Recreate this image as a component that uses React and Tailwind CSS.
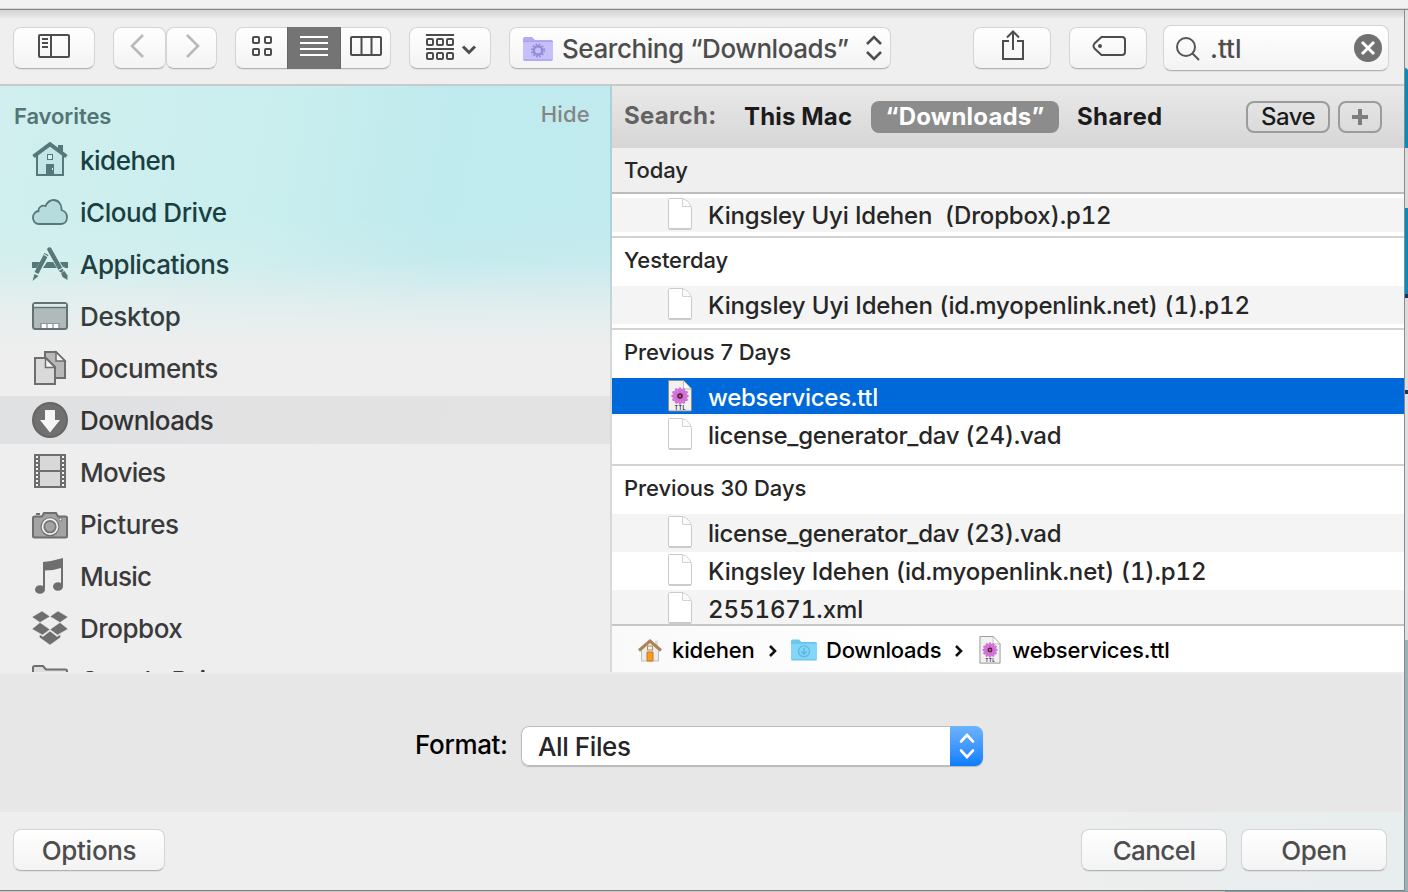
const buttonBase =
  "flex items-center justify-center border border-[#d4d4d4] border-b-[#b4b4b4] bg-linear-to-b from-white to-[#f3f3f3] shadow-[0_1px_0_rgba(0,0,0,0.06)]";

/* ---------- toolbar icons ---------- */

function SidebarIcon() {
  return (
    <svg width="32" height="24" viewBox="0 0 32 24" fill="none" stroke="#4d4d4d" strokeWidth="2" className="-mt-1">
      <rect x="1" y="1" width="30" height="22" rx="1" />
      <path d="M13 1v22M4 5h6M4 9h6M4 13h6" />
    </svg>
  );
}

function ChevronIcon({ flip }) {
  return (
    <svg width="14" height="26" viewBox="0 0 14 26" fill="none" stroke="#b9b9b9" strokeWidth="2.6" className="-mt-1">
      <path d={flip ? "M1 2l11 11L1 24" : "M13 2L2 13l11 11"} />
    </svg>
  );
}

function GridIcon() {
  return (
    <svg width="22" height="22" viewBox="0 0 22 22" fill="none" stroke="#4d4d4d" strokeWidth="2">
      <rect x="2" y="2" width="6" height="6" rx="1" />
      <rect x="14" y="2" width="6" height="6" rx="1" />
      <rect x="2" y="14" width="6" height="6" rx="1" />
      <rect x="14" y="14" width="6" height="6" rx="1" />
    </svg>
  );
}

function ArrangeIcon() {
  return (
    <svg width="52" height="28" viewBox="0 0 52 28" fill="none" stroke="#4d4d4d" strokeWidth="2" className="ml-0.5 mt-0.5">
      <path d="M1 2h28M1 16h28" />
      <rect x="2" y="6" width="6" height="6" rx="1" />
      <rect x="12" y="6" width="6" height="6" rx="1" />
      <rect x="22" y="6" width="6" height="6" rx="1" />
      <rect x="2" y="20" width="6" height="6" rx="1" />
      <rect x="12" y="20" width="6" height="6" rx="1" />
      <rect x="22" y="20" width="6" height="6" rx="1" />
      <path d="M38 13.5l6 6 6-6" strokeWidth="3" />
    </svg>
  );
}

function SmartFolderIcon() {
  return (
    <svg width="30" height="26" viewBox="0 0 30 26" className="ml-px">
      <path d="M0 3a2 2 0 012-2h7l3 3h16a2 2 0 012 2v17a2 2 0 01-2 2H2a2 2 0 01-2-2z" fill="#b3aaf0" />
      <path d="M0 6h30v17H0z" fill="#c5bffa" />
      <path d="M0 5.5h30" stroke="#aaa1ec" />
      <circle cx="15" cy="14.5" r="4.2" fill="none" stroke="#938ad9" strokeWidth="2.4" />
      <circle cx="15" cy="14.5" r="6.2" fill="none" stroke="#938ad9" strokeWidth="1.8" strokeDasharray="1.6 1.65" />
    </svg>
  );
}

/* ---------- sidebar icons, all on a 36px box ---------- */

const G = "#6e6e6e";
const T = "#567879";

const sidebarIcons = {
  home: (
    <>
      <path d="M5 14v19h26V14L18 3z" fill="#c3e6e8" />
      <path d="M5 13v20h26V13" fill="none" stroke={T} strokeWidth="2" />
      <path d="M26 3h5v10l-5-4z" fill={T} />
      <path d="M1.5 14.5L18 2.2l16.5 12.3" fill="none" stroke={T} strokeWidth="4" />
      <rect x="15.5" y="12.5" width="5" height="5" fill="#d7f1f2" stroke={T} />
      <path d="M14 22h8v12h-8z" fill={T} />
      <path d="M20.5 26v2" stroke="#d7f1f2" />
    </>
  ),
  cloud: (
    <path
      d="M7 30a6 6 0 01-6-6.5c0-3.500 2.500-6 5.500-6.500-.5-3.500 3.500-6.500 7-5C15.500 8 18.500 6 21.500 6c5 0 8.500 4.500 8 10 3 .8 5.500 3 5.500 7.500 0 4-2.800 6.500-6.500 6.500z"
      fill="#b6dcde"
      stroke={T}
      strokeWidth="1.8"
    />
  ),
  apps: (
    <>
      <path d="M0 16h8l-3.500 6H0zM28 16h8v6h-4.500zM15 16h6l4 6H11z" fill={T} />
      <path d="M14.500 8L4.500 27" stroke={T} strokeWidth="4.400" />
      <path d="M17.500 3.500L29 24" stroke={T} strokeWidth="4.400" strokeLinecap="round" />
      <path d="M29 27l3.500-2 3 4.500V34l-5-3z" fill={T} />
      <path d="M2.500 28l4 2-6 5z" fill={T} />
      <path d="M12 8.500l5 3M26.500 24.500l6-3.500" stroke="#cdebec" strokeWidth="1.200" />
    </>
  ),
  desktop: (
    <>
      <rect x="1" y="5" width="34" height="26" rx="2.500" fill="#b0baba" stroke="#637374" strokeWidth="2" />
      <path d="M2 6h32v3H2z" fill="#dceaea" />
      <path d="M2 9.500h32" stroke="#637374" strokeWidth="1.400" />
      <path d="M8.500 30v-4.500h19V30" fill="none" stroke="#8e9999" />
      <path d="M10 26h4v4h-4zM16 26h4v4h-4zM22 26h4v4h-4z" fill="#fff" />
    </>
  ),
  documents: (
    <>
      <path d="M13 2h11l9 9v17H13z" fill="#b8b8b8" stroke={G} strokeWidth="2" />
      <path d="M24 2v9h9z" fill="#f4f4f4" stroke={G} strokeWidth="1.500" />
      <path d="M3 8h11l9 9v17H3z" fill="#dadada" stroke={G} strokeWidth="2" />
      <path d="M13.500 8v9.500H23z" fill="#f4f4f4" stroke={G} strokeWidth="1.500" />
    </>
  ),
  downloads: (
    <>
      <circle cx="18" cy="18" r="18" fill="#666" />
      <circle cx="18" cy="18" r="16" fill="#707070" />
      <path d="M13 8h10v10h5L18 30.500 8 18h5z" fill="#f5f5f5" />
    </>
  ),
  movies: (
    <>
      <path d="M2 0h32v34H2z" fill={G} />
      <path d="M8 2h20v14H8zM8 18h20v14H8z" fill="#d8d8d8" />
      <path d="M5 2v31M31 2v31" stroke="#f4f4f4" strokeWidth="2" strokeDasharray="2 2" />
    </>
  ),
  pictures: (
    <>
      <path d="M1 12a1.500 1.500 0 011.500-1.500H10l2-3.500h12l2 3.500h7.500A1.500 1.500 0 0135 12v18a1.500 1.500 0 01-1.500 1.500h-31A1.500 1.500 0 011 30z" fill="#a3a3a3" stroke={G} strokeWidth="2" />
      <path d="M4 8h4" stroke={G} strokeWidth="2" />
      <circle cx="18" cy="20.700" r="9.500" fill={G} />
      <circle cx="18" cy="20.700" r="7.500" fill="#777" stroke="#f3f3f3" strokeWidth="1.700" />
      <circle cx="18" cy="20.700" r="4.800" fill="#a3a3a3" />
      <circle cx="28.500" cy="13.500" r="1.500" fill="#eee" stroke={G} />
    </>
  ),
  music: (
    <>
      <path d="M11 4q10-1 20-4v12l-2-.5V10q-8 2.500-16 2.500V30h-2z" fill={G} />
      <path d="M29 9h2v19h-2z" fill={G} />
      <ellipse cx="8" cy="31.500" rx="5" ry="4.300" fill={G} />
      <ellipse cx="26" cy="28.500" rx="5" ry="4.300" fill={G} />
    </>
  ),
  dropbox: (
    <path
      d="M10 1l8 5.500L8 12.500 0 7zM26 1l10 6-8 5.500-10-6zM0 19l8-6.500 10 7-7.500 5.500zM36 19l-8-6.500-10 7 7.500 5.500zM18 21l7 5.500 3.500-2v3L18 35 7.500 27.500v-3l3.500 2z"
      fill={G}
      stroke="#eee"
      strokeWidth=".5"
    />
  ),
  folder: (
    <path d="M1 36V5.500A1.500 1.500 0 012.500 4H11l3 3.500h19.500A1.500 1.500 0 0135 9v27z" fill="#dedede" stroke={G} strokeWidth="2" />
  ),
};

const favorites = [
  { label: "kidehen", icon: "home", style: "text-[#193f42] tracking-[-0.5px]" },
  { label: "iCloud Drive", icon: "cloud", style: "text-[#193f42] tracking-[-0.45px]" },
  { label: "Applications", icon: "apps", style: "text-[#213f41] tracking-[-0.45px]" },
  { label: "Desktop", icon: "desktop", style: "text-[#353d3e] tracking-[-0.35px]" },
  { label: "Documents", icon: "documents", style: "text-[#3a3a3a] tracking-[-0.45px]" },
  { label: "Downloads", icon: "downloads", style: "text-[#333] tracking-[-0.6px]", active: true },
  { label: "Movies", icon: "movies", style: "text-[#3a3a3a] tracking-[-0.75px]" },
  { label: "Pictures", icon: "pictures", style: "text-[#3a3a3a] tracking-[-0.35px]" },
  { label: "Music", icon: "music", style: "text-[#3a3a3a] tracking-[-0.7px]" },
  { label: "Dropbox", icon: "dropbox", style: "text-[#3a3a3a] tracking-[-0.5px]" },
  { label: "Google Drive", icon: "folder", style: "text-[#3a3a3a] tracking-[-0.6px]" },
];

/* ---------- file icons ---------- */

function FileIcon() {
  return (
    <svg width="24" height="32" viewBox="0 0 24 32" className="shrink-0">
      <path d="M.5 1.500a1 1 0 011-1H14C19 1.500 23 6 23.500 11v19a1 1 0 01-1 1h-21a1 1 0 01-1-1z" fill="#fff" stroke="#cbcbcb" />
      <path d="M1 31h22" stroke="#b3b3b3" />
      <path d="M14.500 1v7.500h8.500" fill="#fafafa" stroke="#d2d2d2" />
    </svg>
  );
}

function TtlIcon({ width = 24, height = 32 }) {
  return (
    <svg width={width} height={height} viewBox="0 0 24 32" className="shrink-0">
      <path d="M.5.5h15l8 8.500v22H.5z" fill="#f1f1f1" stroke="#8d8d8d" />
      <path d="M15.500.5V9h8z" fill="#fff" stroke="#aaa" strokeWidth=".8" />
      <g fill="#dc7be0" stroke="#b04fb8" strokeWidth=".5">
        {[0, 30, 60, 90, 120, 150, 180, 210, 240, 270, 300, 330].map((a) => (
          <ellipse key={a} cx="12" cy="11.500" rx="1.600" ry="4" transform={`rotate(${a} 12 16)`} />
        ))}
      </g>
      <circle cx="12" cy="16" r="2.800" fill="#5b1d50" />
      <circle cx="12" cy="16" r="1.100" fill="#b98a3c" />
      <text x="12.300" y="29.500" fontSize="5.500" fontWeight="600" textAnchor="middle" fill="#222" letterSpacing=".4">
        TTL
      </text>
    </svg>
  );
}

function FileRow({ name, ttl, className }) {
  return (
    <div className={`flex items-center pl-14 ${className}`}>
      <span className="-mt-[2px] flex">{ttl ? <TtlIcon /> : <FileIcon />}</span>
      <span className="ml-4 mt-0.5 whitespace-pre text-2xl leading-none tabular-nums">{name}</span>
    </div>
  );
}

function GroupTitle({ children, className }) {
  return (
    <div className={`flex items-center pl-3 text-[22px] leading-none tracking-[-0.08px] text-[#262626] ${className}`}>
      {children}
    </div>
  );
}

function PathArrow() {
  return (
    <svg width="8" height="14" viewBox="0 0 8 14" fill="none" stroke="#111" strokeWidth="2.600" className="mt-0.5">
      <path d="M1 2l5 5-5 5" />
    </svg>
  );
}

/* ---------- panels ---------- */

function Toolbar() {
  return (
    <div className="flex h-[76px] shrink-0 items-start border-b-2 border-[#c9c9c9] bg-[linear-gradient(#d3d3d3,#e8e8e8_8px,#efefef_8px)] pl-[13px] pt-[17px] text-[#4d4d4d]">
      <button className={`${buttonBase} h-[42px] w-[82px] rounded-lg`}>
        <SidebarIcon />
      </button>
      <button className={`${buttonBase} ml-[18px] h-[42px] w-[53px] rounded-lg pr-[5px]`}>
        <ChevronIcon />
      </button>
      <button className={`${buttonBase} h-[42px] w-[51px] rounded-lg pl-0.5`}>
        <ChevronIcon flip />
      </button>

      <div className={`${buttonBase} ml-[18px] h-[42px] w-[156px] rounded-lg`}>
        <span className="-mt-1 flex w-[51px] justify-center">
          <GridIcon />
        </span>
        <span className="-my-px flex h-[42px] w-[54px] items-center justify-center border-x border-[#666] bg-[#747474] pb-1">
          <svg width="28" height="20" viewBox="0 0 28 20" stroke="#fff" strokeWidth="2">
            <path d="M0 1h28M0 7h28M0 13h28M0 19h28" />
          </svg>
        </span>
        <span className="-mt-1 flex w-[49px] justify-center">
          <svg width="32" height="20" viewBox="0 0 32 20" fill="none" stroke="#4d4d4d" strokeWidth="2">
            <rect x="1" y="1" width="30" height="18" rx="1" />
            <path d="M11.500 1v18M21.500 1v18" />
          </svg>
        </span>
      </div>

      <button className={`${buttonBase} ml-[18px] h-[42px] w-[82px] rounded-lg pb-1`}>
        <ArrangeIcon />
      </button>

      <div className={`${buttonBase} ml-[18px] h-[42px] w-[382px] justify-start! rounded-lg pl-3 pr-2 pt-px`}>
        <SmartFolderIcon />
        <span className="ml-[9px] flex-1 whitespace-nowrap text-[26px] leading-none tracking-[-0.43px]">
          Searching “Downloads”
        </span>
        <svg width="16" height="26" viewBox="0 0 16 26" fill="none" stroke="#4d4d4d" strokeWidth="2.600" className="-mt-0.5">
          <path d="M1 9l7-7 7 7M1 17l7 7 7-7" />
        </svg>
      </div>

      <button className={`${buttonBase} ml-[82px] h-[42px] w-[78px] rounded-lg`}>
        <svg width="24" height="32" viewBox="0 0 24 32" fill="none" stroke="#4d4d4d" strokeWidth="2" className="-mt-1.5 ml-0.5">
          <path d="M8 12H2v18h20V12h-6M12 21V2.500M6 8.500l6-6 6 6" />
        </svg>
      </button>
      <button className={`${buttonBase} ml-[18px] h-[42px] w-[78px] rounded-lg`}>
        <svg width="34" height="20" viewBox="0 0 34 20" fill="none" stroke="#4d4d4d" strokeWidth="2" className="-mt-1 ml-0.5">
          <path d="M9.500 1H30a3 3 0 013 3v12a3 3 0 01-3 3H9.500L2.500 12.500q-2-2.500 0-5z" />
          <circle cx="8" cy="10" r="2" fill="#4d4d4d" stroke="none" />
        </svg>
      </button>

      <div className={`${buttonBase} -mt-[2px] ml-4 h-[46px] w-[226px] rounded-lg pl-3 pr-[6px]`}>
        <svg width="24" height="24" viewBox="0 0 24 24" fill="none" stroke="#555" strokeWidth="2" className="mt-0.5">
          <circle cx="10" cy="10" r="9" />
          <path d="M16.500 16.500L23 23" />
        </svg>
        <span className="ml-2.5 mt-0.5 flex-1 text-[26px] leading-none">.ttl</span>
        <svg width="28" height="28" viewBox="0 0 28 28">
          <circle cx="14" cy="14" r="14" fill="#717171" />
          <path d="M8 8l12 12M20 8L8 20" stroke="#fff" strokeWidth="3" />
        </svg>
      </div>
    </div>
  );
}

function Sidebar() {
  return (
    <div className="h-[586px] w-[610px] overflow-hidden bg-[linear-gradient(to_bottom,transparent_130px,rgba(238,238,238,0.15)_175px,rgba(238,238,238,0.7)_220px,#eeeeee_262px),linear-gradient(100deg,#d0efee,#caeeee_40%,#bfeaee_65%,#c1ebef)]">
      <div className="flex h-12 justify-between pl-[14px] pr-5 text-[22px] leading-none">
        <span className="mt-[19px] font-semibold tracking-[-0.08px] text-[#527575]">Favorites</span>
        <span className="mt-[17px] font-medium tracking-[0.2px] text-[#868686]">Hide</span>
      </div>
      {favorites.map((item) => (
        <div key={item.label} className="flex h-[52px] flex-col justify-center">
          <div className={`flex h-12 items-center pl-8 ${item.active ? "bg-[linear-gradient(100deg,#e0e1e3,#e4e3e3)]" : ""}`}>
            <svg width="36" height="36" viewBox="0 0 36 36" className="shrink-0">
              {sidebarIcons[item.icon]}
            </svg>
            <span className={`ml-3 mt-0.5 whitespace-nowrap text-[26px] leading-none ${item.style}`}>{item.label}</span>
          </div>
        </div>
      ))}
    </div>
  );
}

function Results() {
  return (
    <div className="flex h-[586px] w-[792px] flex-col overflow-hidden bg-white text-[#262626]">
      <div className="flex h-[62px] shrink-0 items-center bg-linear-to-b from-[#e9e9e9] to-[#d6d6d6] pl-3 text-2xl font-bold leading-none text-[#1b1b1b]">
        <span className="-mt-0.5 w-[120px] tracking-[0.3px] text-[#626262]">Search:</span>
        <span className="w-[127px] tracking-[0.15px]">This Mac</span>
        <span className="flex h-8 w-[188px] items-center justify-center rounded-lg bg-[#8c8c8c] tracking-[0.2px] text-white">“Downloads”</span>
        <span className="ml-[18px] w-[169px] tracking-[0.4px]">Shared</span>
        <button className="flex h-8 w-21 items-center justify-center rounded-lg border-2 border-[#9b9b9b] font-medium tracking-[-0.5px]">Save</button>
        <button className="ml-2 flex h-8 w-11 items-center justify-center rounded-lg border-2 border-[#9b9b9b]">
          <svg width="16" height="16" viewBox="0 0 16 16" stroke="#7d7d7d" strokeWidth="4">
            <path d="M8 0v16M0 8h16" />
          </svg>
        </button>
      </div>

      <div className="flex h-[476px] shrink-0 flex-col overflow-hidden">
        <GroupTitle className="h-[46px] shrink-0 border-b-2 border-[#bdbdbd] bg-[#efefef]">Today</GroupTitle>
        <FileRow name="Kingsley Uyi Idehen  (Dropbox).p12" className="my-1 h-[34px] shrink-0 bg-[#f4f4f4] tracking-[-0.17px]" />
        <GroupTitle className="h-[50px] shrink-0 border-t-2 border-[#d3d3d3] pb-1">Yesterday</GroupTitle>
        <FileRow name="Kingsley Uyi Idehen (id.myopenlink.net) (1).p12" className="mb-1 h-[38px] shrink-0 bg-[#f4f4f4] tracking-[-0.14px]" />
        <GroupTitle className="h-[50px] shrink-0 border-t-2 border-[#d3d3d3] pb-1">Previous 7 Days</GroupTitle>
        <FileRow name="webservices.ttl" ttl className="h-[38px] shrink-0 border-b-2 border-[#f8f8f8] bg-[#0069d9] pt-0.5 font-medium tracking-[-0.27px] text-white" />
        <FileRow name="license_generator_dav (24).vad" className="mb-[10px] h-[38px] shrink-0 tracking-[-0.31px]" />
        <GroupTitle className="h-[50px] shrink-0 border-t-2 border-[#d3d3d3] pb-1">Previous 30 Days</GroupTitle>
        <FileRow name="license_generator_dav (23).vad" className="h-[38px] shrink-0 bg-[#f4f4f4] tracking-[-0.31px]" />
        <FileRow name="Kingsley Idehen (id.myopenlink.net) (1).p12" className="h-[38px] shrink-0 tracking-[-0.14px]" />
        <FileRow name="2551671.xml" className="h-[38px] shrink-0 bg-[#f4f4f4] tracking-[-0.08px]" />
      </div>

      <div className="flex h-12 shrink-0 items-center border-t-2 border-[#c6c6c6] bg-linear-to-r from-[#f9f9f9] to-white to-40% pl-[26px] pt-0.5 text-[22px] leading-none text-black">
        <svg width="24" height="24" viewBox="0 0 24 24">
          <path d="M3.500 11v12h17V11L12 4z" fill="#ececec" stroke="#bdbdbd" />
          <path d="M17 2.500h3V8l-3-2z" fill="#ddd" />
          <path d="M1 12.500L12 3l11 9.500" fill="none" stroke="#ab8455" strokeWidth="3" />
          <rect x="9.500" y="8" width="5" height="4" fill="#eee" stroke="#b18d62" />
          <path d="M9 14h6v9H9z" fill="#f39c1f" stroke="#c87b12" />
        </svg>
        <span className="ml-[10px] w-[97px] tracking-[-0.15px]">kidehen</span>
        <PathArrow />
        <svg width="26" height="22" viewBox="0 0 26 22" className="ml-[14px]">
          <path d="M0 2a1.500 1.500 0 011.500-1.500H8L10.500 3H24.500A1.500 1.500 0 0126 4.500V20a1.500 1.500 0 01-1.500 1.500h-23A1.500 1.500 0 010 20z" fill="#6cc7ee" />
          <path d="M0 5h26v15H0z" fill="#83d6f8" />
          <circle cx="13" cy="12.300" r="5.500" fill="none" stroke="#5cb9e3" strokeWidth="1.300" />
          <path d="M13 9v6M10.300 12.500L13 15.300l2.700-2.800" fill="none" stroke="#5cb9e3" strokeWidth="1.600" />
        </svg>
        <span className="ml-[9px] w-[129px] tracking-[-0.22px]">Downloads</span>
        <PathArrow />
        <span className="ml-4 flex">
          <TtlIcon width={22} height={28} />
        </span>
        <span className="ml-[11px] tracking-[-0.18px]">webservices.ttl</span>
      </div>
    </div>
  );
}

export default function App() {
  return (
    <div className="flex h-[892px] w-[1408px] flex-col overflow-hidden bg-[#f1f1f1] pt-2 font-['Inter',sans-serif] font-[450]">
      <div className="h-0.5 shrink-0 border-b border-[#858585] bg-[#d5d5d5]" />
      <div className="flex min-h-0 flex-1">
        <div className="flex h-[881px] w-[1404px] shrink-0 flex-col border-b border-[#7f7f7f]">
          <Toolbar />
          <div className="flex shrink-0">
            <Sidebar />
            <div className="w-0.5 bg-[linear-gradient(#a8d4d8_25%,#d5d8d8_45%,#d8d8d8)]" />
            <Results />
          </div>
          <div className="flex h-[140px] shrink-0 border-t-2 border-r-2 border-[#ededed] bg-[#e7e7e7] pl-[415px] pt-[52px] text-[26px] leading-none text-black">
            <span className="mt-[6px] w-[106px] tracking-[-0.35px]">Format:</span>
            <div className="flex h-10 w-[462px] overflow-hidden rounded-lg shadow-[0_1px_1px_rgba(0,0,0,0.2)]">
              <span className="flex flex-1 items-center rounded-l-lg border border-r-0 border-[#bdbdbd] bg-white pl-4 pt-px tracking-[-0.4px] text-[#262626]">
                All Files
              </span>
              <span className="flex w-[33px] items-center justify-center bg-linear-to-b from-[#6cb3fa] to-[#047cff]">
                <svg width="16" height="26" viewBox="0 0 16 26" fill="none" stroke="#fff" strokeWidth="2.600" strokeLinecap="round">
                  <path d="M2 8.500L8 2l6 6.500M2 17.500L8 24l6-6.500" />
                </svg>
              </span>
            </div>
          </div>
          <div className="flex flex-1 items-start bg-[linear-gradient(100deg,#eeeeee_75%,#e8edee_95%)] pl-[13px] pt-[17px] text-[26px] leading-none text-[#4d4d4d]">
            <button className={`${buttonBase} h-[42px] w-[152px] rounded-lg pt-0.5 tracking-[-0.3px]`}>Options</button>
            <button className={`${buttonBase} ml-[916px] h-[42px] w-[146px] rounded-lg pt-0.5 tracking-[-0.6px]`}>Cancel</button>
            <button className={`${buttonBase} ml-[14px] h-[42px] w-[146px] rounded-lg pt-0.5 tracking-[-0.3px]`}>Open</button>
          </div>
        </div>
        {/* sliver of the desktop behind the dialog */}
        <div className="flex w-1 flex-col border-l border-[#8b8b8b]">
          <div className="h-[58px] bg-[#e2e2e2]" />
          <div className="h-20 rounded-tr-[3px] bg-[#058bbd]" />
          <div className="h-15 bg-[#dcdcdc]" />
          <div className="h-[86px] bg-[#058bbd]" />
          <div className="h-1 bg-[#20315f]" />
          <div className="h-23 bg-[#dcdcdc]" />
          <div className="h-1 bg-[#20315f]" />
          <div className="h-[246px] bg-[#dde1e3]" />
          <div className="flex-1 bg-[#98b2b8]" />
        </div>
      </div>
      <div className="h-px shrink-0 bg-linear-to-r from-[#c4c4c4] from-87% to-[#7fa3a8] to-87%" />
    </div>
  );
}
